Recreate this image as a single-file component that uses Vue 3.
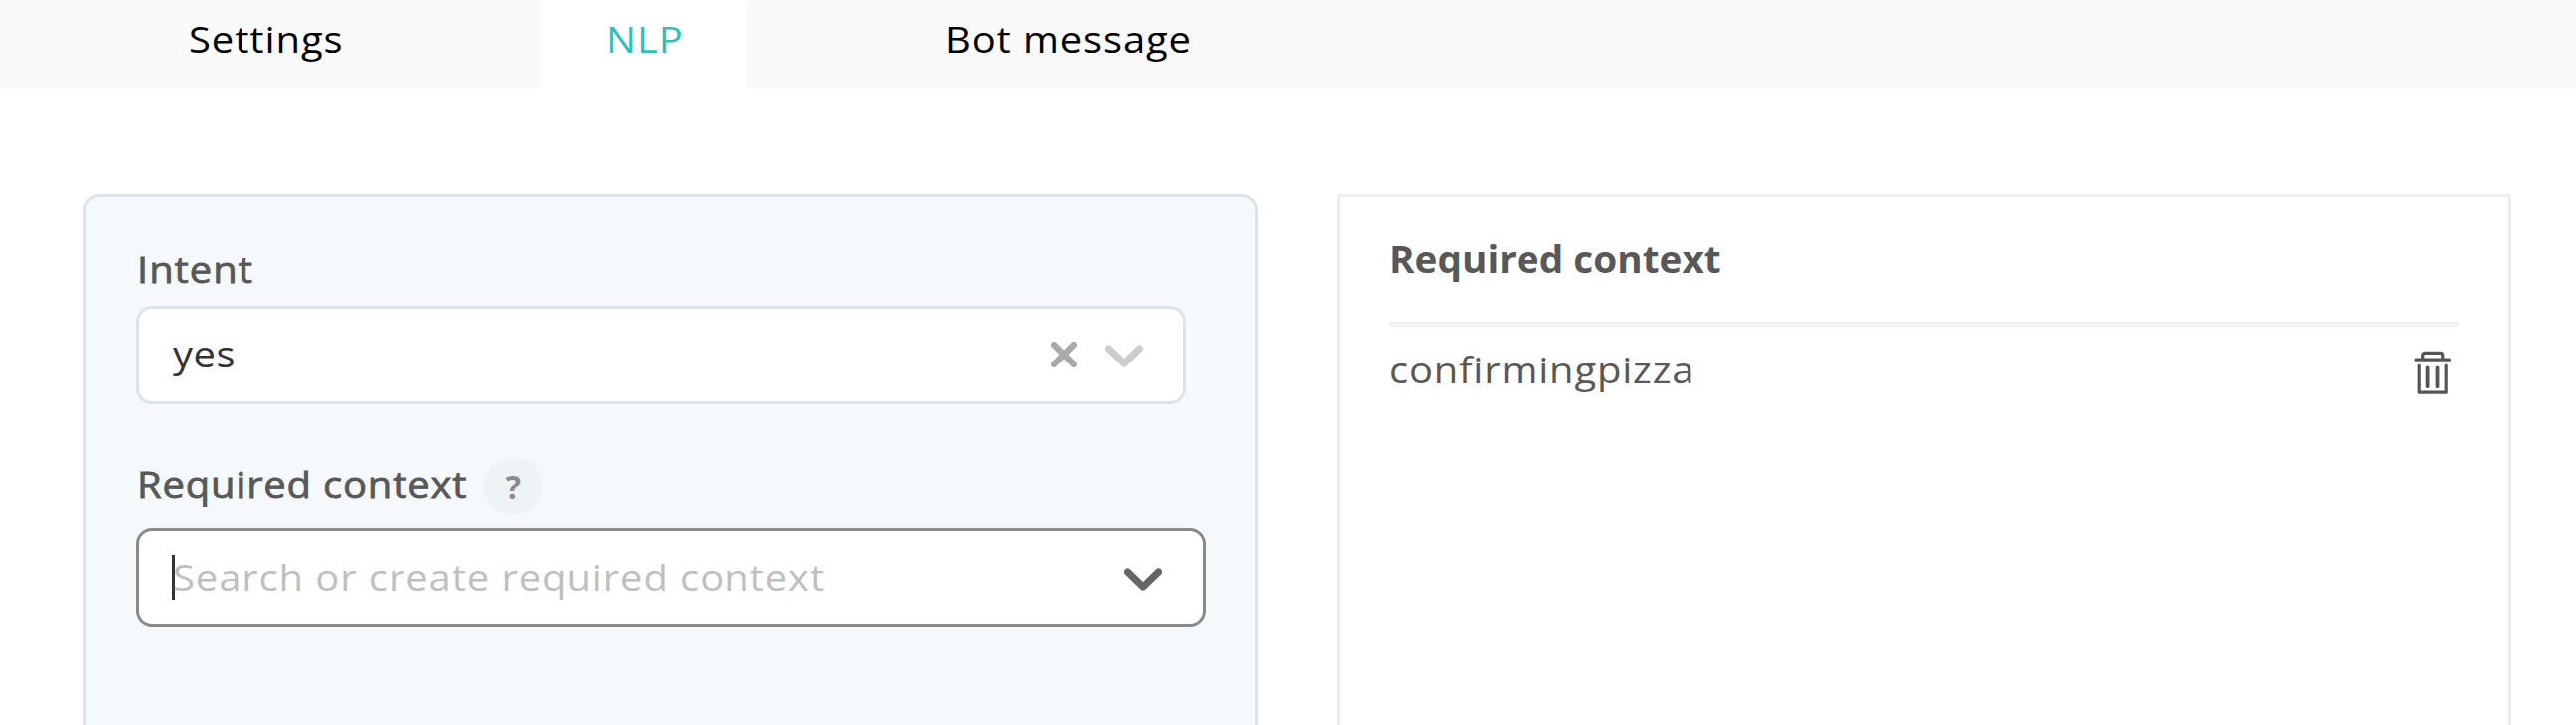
<script setup>
import { ref } from 'vue'

const tabs = [
  { id: 'settings', label: 'Settings' },
  { id: 'nlp', label: 'NLP' },
  { id: 'message', label: 'Bot message' },
]
const active = ref('nlp')
const contexts = ['confirmingpizza']
</script>

<template>
  <div class="page">
    <nav class="tabs">
      <div
        v-for="tab in tabs"
        :key="tab.id"
        class="tab"
        :class="[tab.id, { active: tab.id === active }]"
        @click="active = tab.id"
      ><span class="wide">{{ tab.label }}</span></div>
    </nav>

    <main class="columns">
      <section class="form">
        <div class="label intent"><span class="wide">Intent</span></div>
        <div class="select filled">
          <span class="value wide">yes</span>
          <svg class="clear" width="26" height="26" viewBox="0 0 26 26">
            <path d="M3.2 3.2 22.8 22.8M22.8 3.2 3.2 22.8" />
          </svg>
          <svg class="chevron" width="38" height="24" viewBox="0 0 38 24">
            <path d="M3.6 4.1 19 19 34.4 4.1" />
          </svg>
        </div>

        <div class="label context">
          <span class="wide">Required context</span>
          <i class="help">?</i>
        </div>
        <div class="select focused">
          <b class="caret"></b>
          <span class="placeholder wide">Search or create required context</span>
          <svg class="chevron" width="38" height="24" viewBox="0 0 38 24">
            <path d="M3.6 4.1 19 19 34.4 4.1" />
          </svg>
        </div>
      </section>

      <section class="list">
        <h3><span class="wide">Required context</span></h3>
        <div class="rule"></div>
        <div v-for="name in contexts" :key="name" class="row">
          <span class="name wide">{{ name }}</span>
          <svg class="trash" width="38" height="44" viewBox="0 0 38 44">
            <path d="M2 9.2H35.5M8.7 8.5V5Q8.7 2.3 11.5 2.3H26Q28.8 2.3 28.8 5V8.5" />
            <path d="M5.2 15.2V42.2H32.2V15.2" />
            <path class="bars" d="M13.6 17.4V36.2M23.5 17.4V36.2" />
          </svg>
        </div>
      </section>
    </main>
  </div>
</template>

<style>
body {
  margin: 0;
  background: #fff;
}
</style>

<style scoped>
.page {
  width: 2592px;
  height: 730px;
  overflow: hidden;
  box-sizing: border-box;
  background: #fff;
  color: #585858;
  font-family: "Open Sans", "Liberation Sans", sans-serif;
  font-size: 37px;
  font-weight: 400;
  line-height: 44px;
  white-space: nowrap;
}
.page * {
  box-sizing: border-box;
}
/* Slightly extended letterforms */
.wide {
  display: inline-block;
  transform: scaleX(1.08);
  transform-origin: left center;
}
.tabs {
  display: flex;
  height: 89px;
  background: #fafafa;
  color: #000;
}
.tab {
  padding-top: 17px;
  cursor: pointer;
}
.settings {
  width: 543px;
  padding-left: 190px;
  letter-spacing: 0.85px;
}
.nlp {
  width: 209px;
  padding-left: 67px;
  letter-spacing: 0.8px;
}
.message {
  padding-left: 199px;
  letter-spacing: 0.8px;
}
.active {
  background: #fff;
  color: #35bdbf;
  border-radius: 4px 4px 0 0;
}
.columns {
  display: flex;
  align-items: flex-start;
  gap: 79px;
  padding: 106px 0 0 84px;
}
.form {
  width: 1182px;
  height: 600px;
  padding: 50px 50px;
  background: #f5f9fc;
  border: 3px solid #dbe4eb;
  border-radius: 16px;
}
.label {
  display: flex;
  align-items: center;
  padding-left: 1px;
  -webkit-text-stroke: 0.8px #585858;
}
.intent {
  height: 45px;
  margin: 0 0 15px;
  letter-spacing: 0.9px;
}
.context {
  height: 59px;
  margin: 53px 0 13px;
  letter-spacing: 0.75px;
}
.context > .wide {
  width: 349px;
  margin-top: -5px;
}
.help {
  width: 59px;
  height: 59px;
  border-radius: 50%;
  background: #eef3f6;
  color: #8c8c8c;
  font-size: 32px;
  font-style: normal;
  font-weight: 700;
  line-height: 60px;
  letter-spacing: 0;
  text-align: center;
  -webkit-text-stroke: 0;
}
.select {
  display: flex;
  align-items: center;
  height: 99px;
  background: #fff;
  border: 3px solid #dbe4eb;
  border-radius: 16px;
}
.filled {
  width: 1056px;
  padding: 0 40px 0 34px;
  color: #333;
}
.focused {
  width: 1076px;
  padding: 0 41px 0 33px;
  border-color: #8a8a8a;
}
.value,
.placeholder,
.name {
  flex: 1;
}
.value {
  margin-top: -3px;
  letter-spacing: 0.5px;
}
.caret {
  width: 3px;
  height: 45px;
  margin-right: -2px;
  background: #333;
}
.placeholder {
  margin-top: -1px;
  color: #bfbfbf;
  letter-spacing: 0.85px;
}
svg {
  display: block;
  flex: none;
  fill: none;
  stroke-linecap: round;
  stroke-linejoin: round;
}
.clear {
  margin: -1px 28px 0 0;
  stroke: #a9a9a9;
  stroke-width: 6.4;
}
.chevron {
  margin-top: 2px;
  stroke: #ccc;
  stroke-width: 7.2;
}
.focused .chevron {
  margin-top: 4px;
  stroke: #666;
}
.list {
  width: 1182px;
  height: 600px;
  padding: 41px 50px;
  border: 3px solid #eee;
}
h3 {
  height: 44px;
  margin: 0 0 41px;
  font-size: inherit;
  font-weight: 700;
}
h3 .wide {
  transform: scaleX(1.047);
}
.rule {
  height: 5px;
  border: 2px solid #eee;
}
.row {
  display: flex;
  align-items: flex-start;
  padding: 21px 7px 0 0;
}
.name {
  letter-spacing: 0.75px;
}
.trash {
  margin-top: 3px;
  stroke: #555;
  stroke-width: 3.2;
}
.bars {
  stroke-width: 3.8;
}
</style>
